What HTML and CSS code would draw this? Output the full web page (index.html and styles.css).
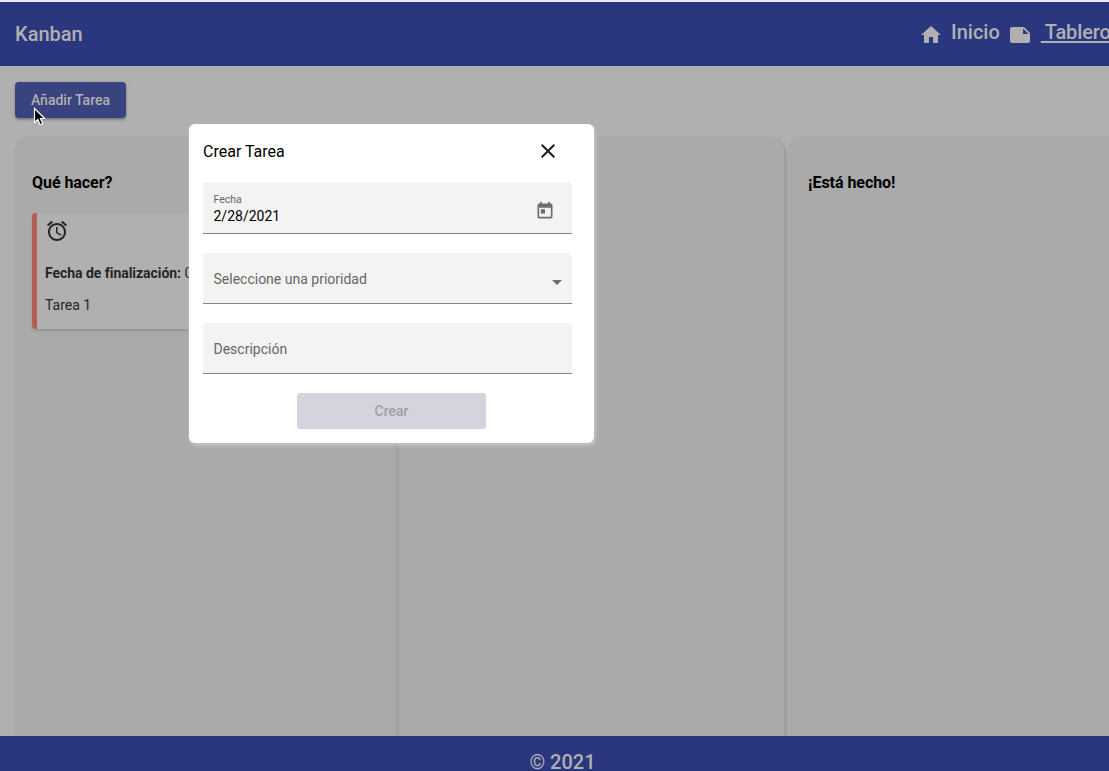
FILE: index.html
```
<!DOCTYPE html>
<html lang="es">
<head>
<meta charset="utf-8">
<title>Kanban</title>
<link rel="stylesheet" href="styles.css">
</head>
<body>
<div class="app">
  <header class="toolbar">
    <span class="brand">Kanban</span>
    <nav class="nav">
      <svg class="nav-icon" viewBox="0 0 24 24"><path d="M10 20v-6h4v6h5v-8h3L12 3 2 12h3v8z"/></svg>
      <a class="nav-link home">Inicio</a>
      <svg class="nav-icon" viewBox="0 0 24 24"><path d="M20 4H4c-1.100 0-1.990.9-1.990 2L2 18c0 1.100.9 2 2 2h16c1.100 0 2-.9 2-2V10L16 4z M15 5.500 20.500 11H15z" fill-rule="evenodd"/></svg>
      <a class="nav-link active">&nbsp;Tablero</a>
    </nav>
  </header>
  <main class="main">
    <button class="add">Añadir Tarea</button>
    <div class="board">
      <section class="column">
        <h2 class="column-title">Qué hacer?</h2>
        <article class="card">
          <svg class="alarm" viewBox="0 0 24 24"><path d="M22 5.720l-4.600-3.860-1.290 1.530 4.600 3.860L22 5.720zM7.880 3.390L6.600 1.860 2 5.710l1.290 1.530 4.590-3.850zM12.500 8H11v6l4.750 2.850.75-1.230-4-2.370V8zM12 4c-4.970 0-9 4.030-9 9s4.020 9 9 9c4.970 0 9-4.030 9-9s-4.030-9-9-9zm0 16c-3.870 0-7-3.130-7-7s3.130-7 7-7 7 3.130 7 7-3.130 7-7 7z"/></svg>
          <p class="due"><strong>Fecha de finalización:</strong> 02/28/2021</p>
          <p class="task">Tarea 1</p>
        </article>
      </section>
      <section class="column"></section>
      <section class="column last">
        <h2 class="column-title">¡Está hecho!</h2>
      </section>
    </div>
  </main>
  <footer class="footer">© 2021</footer>
</div>

<div class="dialog" role="dialog">
  <div class="dialog-head">
    <span class="dialog-title">Crear Tarea</span>
    <svg class="close" viewBox="0 0 24 24"><path d="M19 6.410L17.590 5 12 10.590 6.410 5 5 6.410 10.590 12 5 17.590 6.410 19 12 13.410 17.590 19 19 17.590 13.410 12z"/></svg>
  </div>
  <div class="field date">
    <div class="field-text">
      <label class="label">Fecha</label>
      <span class="value">2/28/2021</span>
    </div>
    <svg class="calendar" viewBox="0 0 24 24"><path d="M19 3h-1V1h-2v2H8V1H6v2H5c-1.110 0-1.990.9-1.990 2L3 19c0 1.100.89 2 2 2h14c1.100 0 2-.9 2-2V5c0-1.100-.9-2-2-2zm0 16H5V8h14v11zM7 10h5v5H7z"/></svg>
  </div>
  <div class="field">
    <span class="placeholder">Seleccione una prioridad</span>
    <span class="arrow"></span>
  </div>
  <div class="field">
    <span class="placeholder">Descripción</span>
  </div>
  <button class="create">Crear</button>
</div>

<svg class="cursor" viewBox="0 0 14 20"><path d="M1.500 1.500v14l3.300-3 2.300 5.200 2.600-1.100-2.300-5.100h4.300z"/></svg>
</body>
</html>
```
FILE: styles.css
```
* { box-sizing: border-box; }
body {
  margin: 0;
  height: 771px;
  overflow: hidden;
  background: #b0b0b0;
  font-family: Roboto, "Liberation Sans", sans-serif;
}
.app {
  height: 771px;
  display: flex;
  flex-direction: column;
  border-top: 2px solid #e9ebf2;
}
.toolbar {
  height: 64px;
  flex: none;
  display: flex;
  align-items: center;
  justify-content: space-between;
  padding-left: 15px;
  background: #2a377e;
  color: #b0b0b0;
  font-size: 20px;
  font-weight: 500;
  overflow: hidden;
}
.nav {
  width: 189px;
  flex: none;
  display: flex;
  align-items: center;
  white-space: nowrap;
}
.nav-icon { width: 24px; height: 24px; flex: none; fill: #b0b0b0; margin-top: 2px; margin-left: -1px; }
.nav-link { padding-bottom: 4px; }
.home { margin: 0 9px 0 8px; }
.active { margin-left: 9px; letter-spacing: -.1px; word-spacing: -1px; text-decoration: underline; text-underline-offset: 2px; text-decoration-thickness: 2px; }
.main {
  flex: 1;
  min-height: 0;
  display: flex;
  flex-direction: column;
  padding: 16px 0 0 14px;
}
.add {
  width: 111px;
  height: 36px;
  flex: none;
  margin: 0 0 18px 1px;
  padding: 0;
  border: 0;
  border-radius: 4px;
  background: #39437f;
  color: #b0b0b0;
  font: 500 14px Roboto, sans-serif;
  box-shadow: 0 2px 2px rgba(0,0,0,.2), 0 1px 4px rgba(0,0,0,.15);
}
.board {
  flex: 1;
  min-height: 0;
  display: grid;
  grid-template-columns: 382px 385px 1fr;
  column-gap: 3px;
}
.column {
  min-width: 0;
  padding: 38px 18px 0;
  border-radius: 16px 16px 0 0;
  background: #aaa;
  box-shadow: 3px 2px 1px #a0a0a0;
}
.last { padding-left: 21px; border-radius: 16px 0 0 0; box-shadow: none; }
.column-title { margin: 0 0 21px; font-size: 16px; line-height: 18px; font-weight: 700; letter-spacing: -.05px; color: #000; }
.card {
  height: 116px;
  padding: 6px 8px;
  border-left: 5px solid #b35c51;
  border-radius: 4px;
  background: #b0b0b0;
  box-shadow: 0 2px 3px rgba(0,0,0,.13);
  color: #252525;
  font-size: 14px;
}
.alarm { display: block; width: 24px; height: 24px; fill: #252525; }
.due { margin: 22px 0 0; line-height: 16px; white-space: nowrap; letter-spacing: -.04px; }
.task { margin: 16px 0 0; line-height: 16px; }
.footer {
  height: 35px;
  flex: none;
  padding: 14px 0 0 16px;
  background: #2a377e;
  color: #b0b0b0;
  font-size: 20px;
  line-height: 24px;
  font-weight: 500;
  text-align: center;
  overflow: hidden;
}
.dialog {
  position: absolute;
  left: 189px;
  top: 124px;
  width: 405px;
  height: 319px;
  padding: 15px 22px 0 14px;
  border-radius: 6px;
  background: #fff;
  box-shadow: 1px 2px 3px 1px rgba(198,198,198,.8);
}
.dialog-head {
  height: 43px;
  display: flex;
  align-items: flex-start;
  justify-content: space-between;
  padding-right: 12.500px;
}
.dialog-title { font-size: 16px; line-height: 25px; color: #000; }
.close { width: 24px; height: 24px; fill: #1d1d1d; }
.field {
  height: 51px;
  margin-bottom: 19px;
  display: flex;
  align-items: center;
  justify-content: space-between;
  padding: 0 10px 0 10.500px;
  border-bottom: 1px solid #858585;
  border-radius: 4px 4px 0 0;
  background: #f3f3f3;
}
.date { height: 52px; padding-right: 17.500px; }
.field-text { display: flex; flex-direction: column; padding-top: 3px; }
.label { font-size: 10.500px; line-height: 14px; color: #666; }
.value { font-size: 14px; line-height: 19px; color: #000; }
.calendar { width: 20px; height: 20px; fill: #6d6d6d; margin-top: 6px; }
.placeholder { font-size: 14px; line-height: 18px; color: #666; padding-top: 2px; }
.arrow { border: 5px solid transparent; border-top-color: #6d6d6d; border-bottom: 0; margin-top: 8px; }
.create {
  display: block;
  width: 189px;
  height: 36px;
  margin-left: 94px;
  padding: 0;
  border: 0;
  border-radius: 3px;
  background: #d4d4de;
  color: #a0a0a3;
  font: 500 14px Roboto, sans-serif;
}
.cursor {
  position: absolute;
  left: 33px;
  top: 107px;
  width: 14px;
  height: 20px;
  fill: #000;
  stroke: #fff;
  stroke-width: 1.200px;
}
```
